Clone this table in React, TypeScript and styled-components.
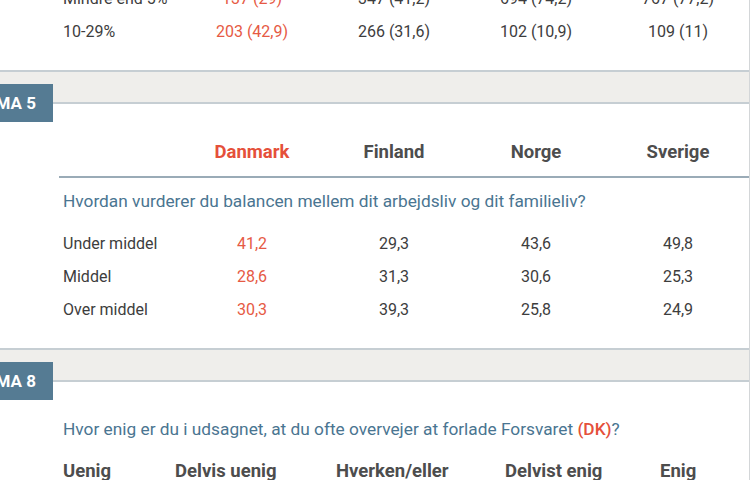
import React from 'react';
import styled, { createGlobalStyle } from 'styled-components';

const Global = createGlobalStyle`
  html, body { margin: 0; padding: 0; background: #fff; overflow: hidden; }
  body { font-family: Roboto, "Noto Sans", sans-serif; }
`;

const Page = styled.div`
  width: 750px;
  height: 480px;
  overflow: hidden;
  box-sizing: border-box;
  border-right: 1px solid #d3d6d8;
  background: #fff;
  display: flex;
  flex-direction: column;
`;

const Section = styled.section<{ $top?: number; $bottom?: number }>`
  margin-left: 59px;
  padding-top: ${(p) => p.$top ?? 0}px;
  padding-bottom: ${(p) => p.$bottom ?? 22}px;
  flex-shrink: 0;
`;

const COLS = '118px repeat(4, 142px)';

const Row = styled.div`
  display: grid;
  grid-template-columns: ${COLS};
  padding-left: 4px;
  height: 33px;
  align-items: center;
  font-size: 16px;
  color: #3d3d3d;
  white-space: nowrap;
`;

const Cell = styled.span<{ $center?: boolean; $accent?: boolean }>`
  text-align: ${(p) => (p.$center ? 'center' : 'left')};
  color: ${(p) => (p.$accent ? '#e65a44' : 'inherit')};
`;

const HeaderRow = styled.div`
  display: grid;
  grid-template-columns: ${COLS};
  padding: 36px 0 12px 4px;
  line-height: 24px;
  border-bottom: 2px solid #9aabb7;
  font-size: 18.5px;
  font-weight: 700;
  color: #4d4d4d;
`;

const HeadCell = styled.span<{ $accent?: boolean }>`
  text-align: center;
  color: ${(p) => (p.$accent ? '#e5503a' : 'inherit')};
`;

const Question = styled.div<{ $top?: number; $bottom?: number }>`
  padding: ${(p) => p.$top ?? 12}px 0 ${(p) => p.$bottom ?? 14.5}px 4px;
  line-height: 22px;
  font-size: 17.3px;
  color: #4a7591;
  white-space: nowrap;
`;

const Red = styled.span`
  color: #e5503a;
  font-weight: 500;
`;

const Band = styled.div`
  position: relative;
  flex-shrink: 0;
  height: 30px;
  border-top: 2px solid #c6ced3;
  border-bottom: 2px solid #c6ced3;
  background: #efeeeb;
`;

const Tag = styled.div`
  position: absolute;
  left: 0;
  top: 12px;
  z-index: 1;
  width: 53px;
  height: 38px;
  box-sizing: border-box;
  padding-right: 17px;
  display: flex;
  align-items: center;
  justify-content: flex-end;
  background: #557b93;
  color: #fff;
  font-size: 17px;
  font-weight: 700;
  white-space: nowrap;
`;

const ScaleRow = styled.div`
  display: grid;
  grid-template-columns: 112px 161px 169px 155px auto;
  padding-left: 4px;
  line-height: 24px;
  font-size: 18.5px;
  font-weight: 700;
  color: #4d4d4d;
  white-space: nowrap;
`;

const TopSection = styled(Section)`
  margin-top: -18px;
`;

type DataRow = { label: string; values: string[] };

const topRows: DataRow[] = [
  { label: 'Mindre end 5%', values: ['137 (29)', '347 (41,2)', '694 (74,2)', '767 (77,2)'] },
  { label: '10-29%', values: ['203 (42,9)', '266 (31,6)', '102 (10,9)', '109 (11)'] },
];

const balanceRows: DataRow[] = [
  { label: 'Under middel', values: ['41,2', '29,3', '43,6', '49,8'] },
  { label: 'Middel', values: ['28,6', '31,3', '30,6', '25,3'] },
  { label: 'Over middel', values: ['30,3', '39,3', '25,8', '24,9'] },
];

const countries = ['Danmark', 'Finland', 'Norge', 'Sverige'];
const scale = ['Uenig', 'Delvis uenig', 'Hverken/eller', 'Delvist enig', 'Enig'];

const DataRows: React.FC<{ rows: DataRow[] }> = ({ rows }) => (
  <>
    {rows.map((r) => (
      <Row key={r.label}>
        <Cell>{r.label}</Cell>
        {r.values.map((v, i) => (
          <Cell key={i} $center $accent={i === 0}>
            {v}
          </Cell>
        ))}
      </Row>
    ))}
  </>
);

export default function App() {
  return (
    <>
      <Global />
      <Page>
        <TopSection>
          <DataRows rows={topRows} />
        </TopSection>
        <Band>
          <Tag>MA 5</Tag>
        </Band>
        <Section>
          <HeaderRow>
            <span />
            {countries.map((c, i) => (
              <HeadCell key={c} $accent={i === 0}>
                {c}
              </HeadCell>
            ))}
          </HeaderRow>
          <Question>Hvordan vurderer du balancen mellem dit arbejdsliv og dit familieliv?</Question>
          <DataRows rows={balanceRows} />
        </Section>
        <Band>
          <Tag>MA 8</Tag>
        </Band>
        <Section $top={36.5} $bottom={0}>
          <Question $top={0} $bottom={19}>
            Hvor enig er du i udsagnet, at du ofte overvejer at forlade Forsvaret <Red>(DK)</Red>?
          </Question>
          <ScaleRow>
            {scale.map((s) => (
              <span key={s}>{s}</span>
            ))}
          </ScaleRow>
        </Section>
      </Page>
    </>
  );
}
